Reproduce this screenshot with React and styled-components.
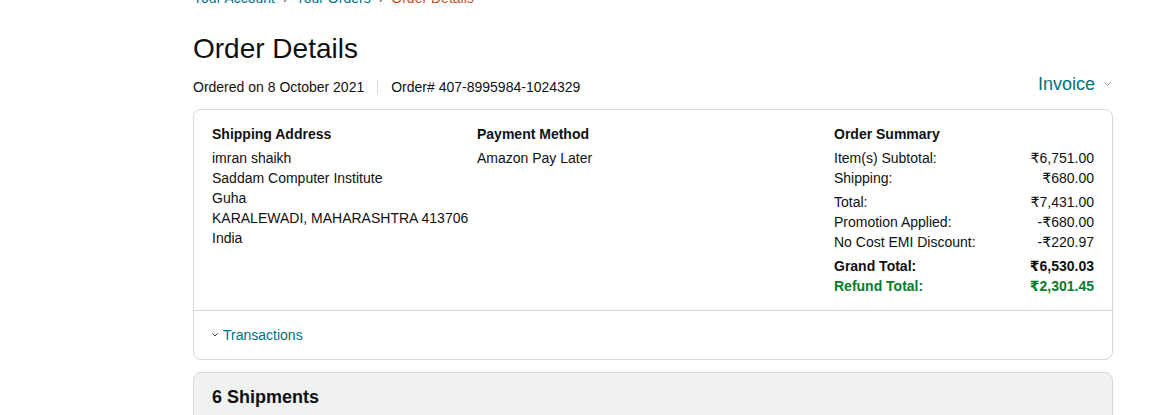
import React from 'react'
import styled, { createGlobalStyle } from 'styled-components'

const GlobalStyle = createGlobalStyle`
  html, body {
    margin: 0;
    padding: 0;
    background: #fff;
    overflow: hidden;
  }
  body {
    font-family: "Liberation Sans", Arial, "DejaVu Sans", sans-serif;
    color: #0f1111;
    font-size: 14px;
    line-height: 20px;
  }
`

const Page = styled.div`
  width: 920px;
  padding-left: 193px;
  height: 415px;
  overflow: hidden;
`

const Breadcrumb = styled.div`
  margin-top: -12px;
  display: flex;
  gap: 8px;
  font-size: 14px;
  line-height: 20px;
  color: #555;
`

const Crumb = styled.a`
  color: ${p => (p.current ? '#c7511f' : '#007185')};
  text-decoration: none;
`

const Title = styled.h1`
  margin: 23px 0 0;
  font-size: 28px;
  line-height: 36px;
  font-weight: 400;
`

const SubRow = styled.div`
  margin-top: 3px;
  display: flex;
  align-items: flex-start;
  justify-content: space-between;
`

const Meta = styled.div`
  margin-top: 7px;
  display: flex;
  align-items: center;
`

const MetaDivider = styled.span`
  width: 1px;
  height: 14px;
  background: #d5d9d9;
  margin: 0 13px;
`

const Invoice = styled.a`
  display: flex;
  align-items: center;
  gap: 9px;
  margin-top: 2px;
  margin-right: 2px;
  font-size: 18px;
  line-height: 24px;
  color: #007185;
  text-decoration: none;
`

const Card = styled.div`
  margin-top: 12px;
  border: 1px solid #d5d9d9;
  border-radius: 8px;
`

const CardBody = styled.div`
  display: grid;
  grid-template-columns: 265px 357px 1fr;
  padding: 14px 18px 14px 18px;
  border-bottom: 1px solid #d5d9d9;
`

const Heading = styled.div`
  font-weight: 700;
  margin-bottom: 4px;
`

const Line = styled.div``

const SummaryRow = styled.div`
  display: flex;
  justify-content: space-between;
  margin-top: ${p => (p.gap ? '4px' : '0')};
  font-weight: ${p => (p.bold ? 700 : 400)};
  color: ${p => (p.green ? '#067d2c' : '#0f1111')};
`

const Footer = styled.div`
  padding: 14px 18px;
  display: flex;
  align-items: center;
  gap: 5px;
  color: #007185;
`

const Shipments = styled.div`
  margin-top: 12px;
  border: 1px solid #d5d9d9;
  border-radius: 8px 8px 0 0;
  background: #f0f2f2;
  padding: 12px 18px 20px;
  font-size: 18px;
  line-height: 24px;
  font-weight: 700;
`

const Chevron = ({ size = 7, color = '#565959' }) => (
  <svg width={size} height={size * 0.6} viewBox="0 0 10 6" fill="none">
    <path d="M1 1l4 4 4-4" stroke={color} strokeWidth="1.4" strokeLinecap="round" strokeLinejoin="round" />
  </svg>
)

const summary = [
  { label: 'Item(s) Subtotal:', value: '₹6,751.00' },
  { label: 'Shipping:', value: '₹680.00' },
  { label: 'Total:', value: '₹7,431.00', gap: true },
  { label: 'Promotion Applied:', value: '-₹680.00' },
  { label: 'No Cost EMI Discount:', value: '-₹220.97' },
  { label: 'Grand Total:', value: '₹6,530.03', gap: true, bold: true },
  { label: 'Refund Total:', value: '₹2,301.45', bold: true, green: true },
]

export default function App() {
  return (
    <>
      <GlobalStyle />
      <Page>
        <Breadcrumb>
          <Crumb href="#">Your Account</Crumb>
          <span>›</span>
          <Crumb href="#">Your Orders</Crumb>
          <span>›</span>
          <Crumb current href="#">Order Details</Crumb>
        </Breadcrumb>

        <Title>Order Details</Title>

        <SubRow>
          <Meta>
            <span>Ordered on 8 October 2021</span>
            <MetaDivider />
            <span>Order# 407-8995984-1024329</span>
          </Meta>
          <Invoice href="#">
            Invoice
            <Chevron size={7} color="#8a8f8f" />
          </Invoice>
        </SubRow>

        <Card>
          <CardBody>
            <div>
              <Heading>Shipping Address</Heading>
              <Line>imran shaikh</Line>
              <Line>Saddam Computer Institute</Line>
              <Line>Guha</Line>
              <Line>KARALEWADI, MAHARASHTRA 413706</Line>
              <Line>India</Line>
            </div>
            <div>
              <Heading>Payment Method</Heading>
              <Line>Amazon Pay Later</Line>
            </div>
            <div>
              <Heading>Order Summary</Heading>
              {summary.map(r => (
                <SummaryRow key={r.label} gap={r.gap} bold={r.bold} green={r.green}>
                  <span>{r.label}</span>
                  <span>{r.value}</span>
                </SummaryRow>
              ))}
            </div>
          </CardBody>
          <Footer>
            <Chevron size={6} color="#0f1111" />
            <span>Transactions</span>
          </Footer>
        </Card>

        <Shipments>6 Shipments</Shipments>
      </Page>
    </>
  )
}
